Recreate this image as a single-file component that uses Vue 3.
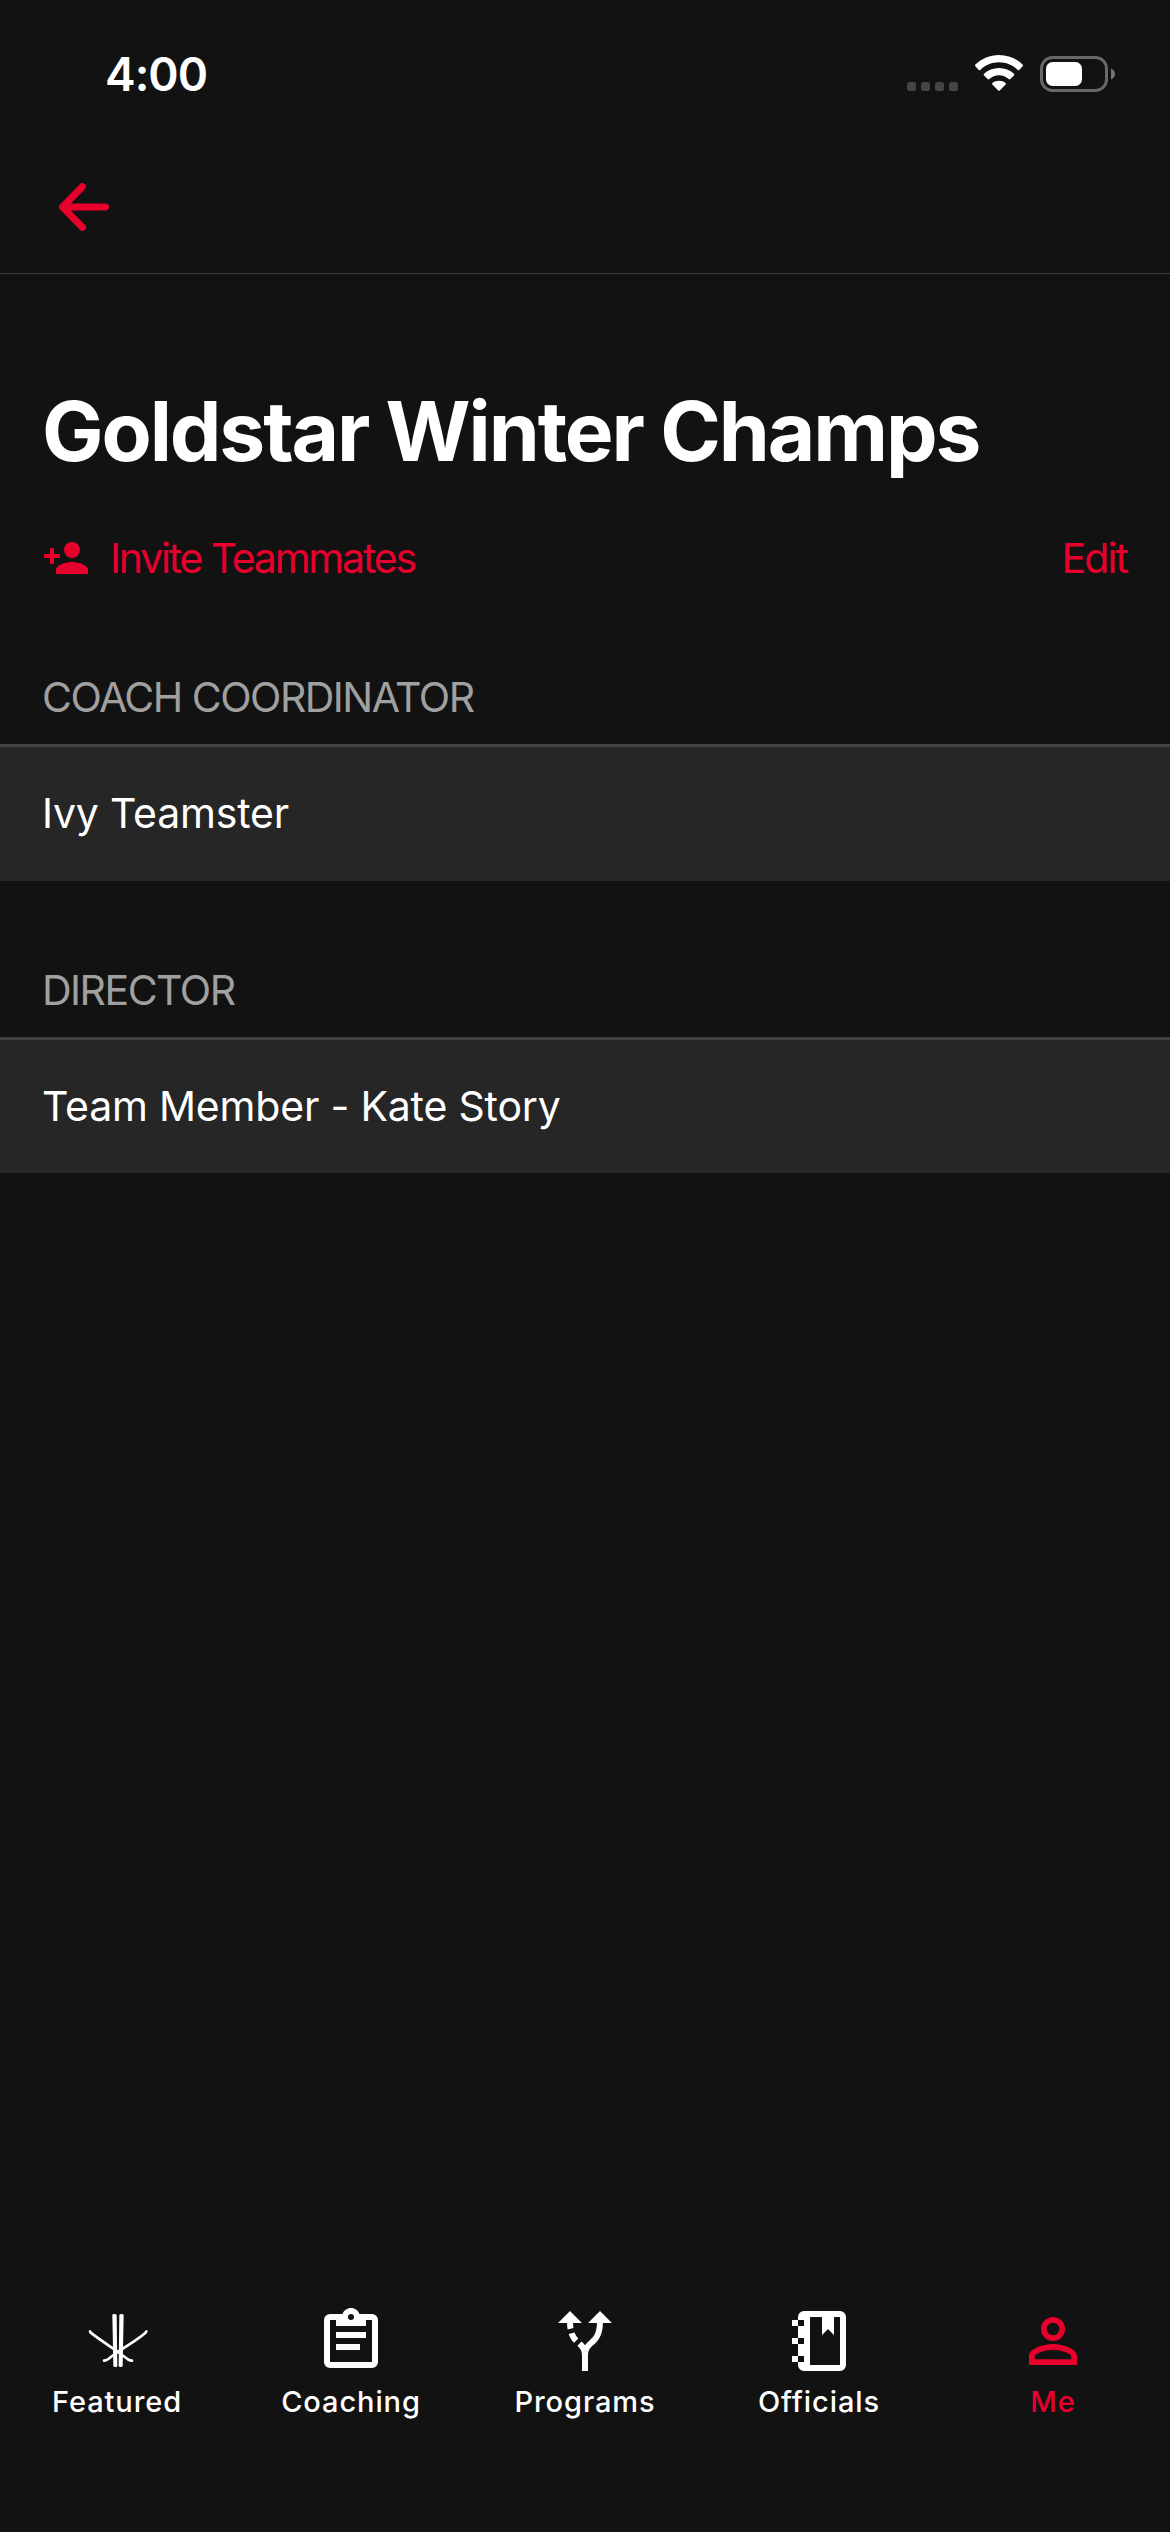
<template>
    <div class="screen">
        <div class="status-bar">
            <span class="time">4:00</span>
            <div class="indicators">
                <svg class="dots" viewBox="0 0 51 38" fill="#454545">
                    <rect v-for="n in 4" :key="n" :x="(n - 1) * 14" y="27" width="9" height="9" rx="2.5" />
                </svg>
                <svg class="wifi" viewBox="0 0 48 38" fill="#fff">
                    <path d="M24 0C33 0 41.500 3.600 47.600 9.600Q48.400 10.400 47.600 11.200L44.300 14.900Q43.500 15.700 42.700 14.900C37.500 10 31 7.300 24 7.300S10.500 10 5.300 14.900Q4.500 15.700 3.700 14.900L.4 11.200Q-.4 10.400.4 9.600C6.500 3.600 15 0 24 0Z" />
                    <path d="M24 13C29.800 13 35 15.200 39 18.800Q39.800 19.600 39 20.400L35.300 24.100Q34.500 24.900 33.600 24.100C31 21.700 27.700 20.300 24 20.300S17 21.700 14.400 24.100Q13.500 24.900 12.700 24.100L9 20.400Q8.200 19.600 9 18.800C13 15.200 18.200 13 24 13Z" />
                    <path d="M24 25.700C26.600 25.700 28.900 26.600 30.600 28Q31.400 28.800 30.600 29.600L24.800 35.400Q24 36.200 23.200 35.400L17.400 29.600Q16.600 28.800 17.400 28C19.100 26.600 21.400 25.700 24 25.700Z" />
                </svg>
                <svg class="battery" viewBox="0 0 75 38">
                    <rect x="1.500" y="2.500" width="65" height="33" rx="11" fill="none" stroke="#686868" stroke-width="3" />
                    <rect x="6" y="7" width="36" height="24" rx="6.500" fill="#fff" />
                    <path d="M71 13.500C73.500 14.500 75 16.700 75 19S73.500 23.500 71 24.500Z" fill="#767676" />
                </svg>
            </div>
        </div>

        <header class="header">
            <svg class="back" viewBox="0 0 50 48" fill="none" stroke="#e8002d" stroke-width="7" stroke-linecap="round" stroke-linejoin="round">
                <path d="M23.300 3.700L3.500 24L23.300 44.300M4 24H46.500" />
            </svg>
        </header>

        <main class="content">
            <h1 class="title">Goldstar Winter Champs</h1>

            <div class="actions">
                <div class="invite">
                    <svg viewBox="0 0 24 24">
                        <path d="M15,14C12.330,14 7,15.330 7,18V20H23V18C23,15.330 17.670,14 15,14M6,10V7H4V10H1V12H4V15H6V12H9V10M15,12A4,4 0 0,0 19,8A4,4 0 0,0 15,4A4,4 0 0,0 11,8A4,4 0 0,0 15,12Z" />
                    </svg>
                    <span>Invite Teammates</span>
                </div>
                <span class="edit">Edit</span>
            </div>

            <section v-for="group in groups" :key="group.role" class="group">
                <h2>{{ group.role }}</h2>
                <div class="member">{{ group.member }}</div>
            </section>
        </main>

        <nav class="tabs">
            <div v-for="tab in tabs" :key="tab.label" class="tab" :class="{ active: tab.active }">
                <svg v-if="tab.icon" viewBox="0 0 24 24">
                    <path :d="tab.icon" fill-rule="evenodd" />
                </svg>
                <svg v-else class="logo" viewBox="153 45 216 216">
                    <path d="M247 75Q247 72 253 72T260 75L262 228Q262 231 256 231T250 228Z" />
                    <path d="M268 75Q268 72 274 72T281 75L278 228Q278 231 272 231T266 228Z" />
                    <path class="stroke" d="M180 124L182 128Q205 146 260 183Q285 202 294 208Q300 212 306 212" />
                    <path class="stroke" d="M349 124L346 129Q325 147 267 183Q242 201 235 207Q228 212 222 212" />
                </svg>
                <span>{{ tab.label }}</span>
            </div>
        </nav>
    </div>
</template>

<script setup>
import { ref } from 'vue';

const groups = ref([
    { role: 'COACH COORDINATOR', member: 'Ivy Teamster' },
    { role: 'DIRECTOR', member: 'Team Member - Kate Story' },
]);

const tabs = [
    { label: 'Featured' },
    {
        label: 'Coaching',
        icon: 'M19 3H14.820C14.400 1.840 13.300 1 12 1S9.600 1.840 9.180 3H5A2 2 0 0 0 3 5V19A2 2 0 0 0 5 21H19A2 2 0 0 0 21 19V5A2 2 0 0 0 19 3ZM12 3A1 1 0 1 1 12 5A1 1 0 1 1 12 3ZM5 5H7V7H17V5H19V19H5ZM7 9H17V11H7ZM7 13H15V15H7Z',
    },
    {
        label: 'Programs',
        icon: 'M9.780 11.160l-1.420 1.420c-.68-.69-1.340-1.580-1.790-2.940l1.940-.49c.32.89.77 1.500 1.270 2.010zM11 6L7 2 3 6h3.020c.02.81.08 1.540.19 2.170l1.940-.49C8.080 7.200 8.030 6.630 8.020 6H11zm10 0l-4-4-4 4h2.990c-.1 3.680-1.280 4.750-2.540 5.880-.5.44-1.010.92-1.450 1.550-.34-.49-.73-.88-1.130-1.240L9.460 13.600c.93.85 1.540 1.540 1.540 3.400v5h2v-5c0-2.020.71-2.660 1.790-3.630 1.380-1.240 3.080-2.780 3.200-7.370H21z',
    },
    {
        label: 'Officials',
        icon: 'M3 5H5V4A2 2 0 0 1 7 2H19A2 2 0 0 1 21 4V20A2 2 0 0 1 19 22H7A2 2 0 0 1 5 20V19H3V17H5V13H3V11H5V7H3ZM5 5V7H7V5ZM5 11V13H7V11ZM5 17V19H7V17ZM9 4V20H19V4H17V10L15 8L13 10V4Z',
    },
    {
        label: 'Me',
        active: true,
        icon: 'M12,13C14.670,13 20,14.330 20,17V20H4V17C4,14.330 9.330,13 12,13M12,4A4,4 0 0,1 16,8A4,4 0 0,1 12,12A4,4 0 0,1 8,8A4,4 0 0,1 12,4M12,14.900C9.030,14.900 5.900,16.360 5.900,17V18.100H18.100V17C18.100,16.360 14.970,14.900 12,14.900M12,5.900A2.100,2.100 0 0,0 9.900,8A2.100,2.100 0 0,0 12,10.100A2.100,2.100 0 0,0 14.100,8A2.100,2.100 0 0,0 12,5.900Z',
    },
];
</script>

<style>
body {
    background: #121212;
}
</style>

<style scoped>
.screen {
    display: flex;
    flex-direction: column;
    width: 1170px;
    height: 2532px;
    overflow: hidden;
    background: #121212;
    color: #fff;
    font-family: Inter, "Liberation Sans", sans-serif;
}

svg {
    display: block;
    flex-shrink: 0;
}

.status-bar {
    display: flex;
    justify-content: space-between;
    align-items: center;
    height: 148px;
    padding: 0 55px 0 105px;
}

.time {
    font-size: 46px;
    font-weight: 600;
    line-height: 60px;
    letter-spacing: -1px;
}

.indicators {
    display: flex;
}

.indicators svg {
    height: 38px;
}

.dots {
    width: 51px;
}

.wifi {
    width: 48px;
    margin: 0 17px;
}

.battery {
    width: 75px;
}

.header {
    height: 126px;
    padding: 35px 59px 0;
    box-sizing: border-box;
    border-bottom: 1px solid #3e3e3e;
}

.back {
    width: 50px;
    height: 48px;
}

.title {
    margin: 108px 42px 0;
    font-size: 82px;
    font-weight: 700;
    line-height: 100px;
    letter-spacing: -2.1px;
    white-space: nowrap;
}

.actions {
    display: flex;
    justify-content: space-between;
    align-items: center;
    height: 48px;
    margin-top: 52px;
    padding: 0 43px 0 42px;
    color: #e8002d;
    font-size: 41px;
    letter-spacing: -2.2px;
}

.invite {
    display: flex;
    align-items: center;
    gap: 20px;
}

.invite svg {
    width: 48px;
    height: 48px;
    fill: #e8002d;
}

.edit {
    letter-spacing: -1.9px;
}

.group {
    margin-top: 84px;
}

.actions + .group {
    margin-top: 90px;
}

.group h2 {
    margin: 0;
    padding: 0 42px 22px;
    color: #a0a0a0;
    font-size: 41px;
    font-weight: 400;
    line-height: 50px;
    letter-spacing: -1.5px;
}

.member {
    height: 93px;
    padding: 41px 42px 0;
    border-top: 3px solid #424242;
    background: #262626;
    font-size: 41px;
    line-height: 50px;
    letter-spacing: -0.2px;
}

.group:last-child .member {
    height: 92px;
}

.tabs {
    display: grid;
    grid-template-columns: repeat(5, 1fr);
    height: 227px;
    margin-top: auto;
}

.tab {
    display: flex;
    flex-direction: column;
    align-items: center;
    gap: 7px;
    font-size: 29px;
    font-weight: 500;
    line-height: 36px;
    letter-spacing: 0.9px;
}

.tab svg {
    width: 72px;
    height: 72px;
    fill: currentColor;
}

.tab.active {
    color: #e8002d;
}

.logo .stroke {
    fill: none;
    stroke: currentColor;
    stroke-width: 8;
    stroke-linecap: round;
    stroke-linejoin: round;
}
</style>
